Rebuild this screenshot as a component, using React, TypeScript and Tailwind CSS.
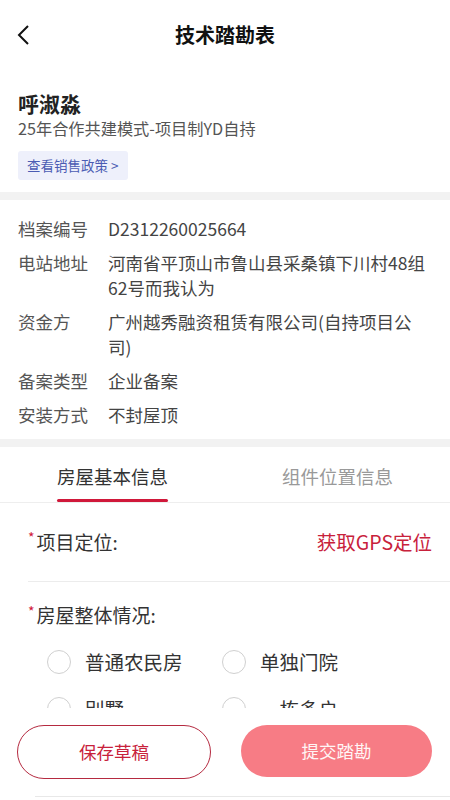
import React from "react";

const font = { fontFamily: '"Noto Sans CJK SC", "Noto Sans", sans-serif' };

function InfoRow({ label, value }: { label: string; value: string }) {
  return (
    <div className="flex text-[17.5px] leading-[25px] text-[#555]">
      <div className="w-[90px] shrink-0">{label}</div>
      <div className="flex-1 text-[#444]">{value}</div>
    </div>
  );
}

function Radio({ label }: { label: string }) {
  return (
    <div className="flex items-center h-[47px]">
      <span className="w-[24px] h-[24px] rounded-full border-[1.5px] border-[#d0d0d0] shrink-0" />
      <span className="ml-[14px] text-[19.5px] text-[#333] whitespace-nowrap">{label}</span>
    </div>
  );
}

export default function App() {
  return (
    <div className="w-[450px] h-[800px] overflow-hidden bg-white flex flex-col" style={font}>
      {/* header */}
      <div className="h-[70px] shrink-0 flex items-center relative">
        <div className="pl-[17px] w-[60px]">
          <svg width="12" height="20" viewBox="0 0 12 20" fill="none">
            <polyline points="11,1 2,10 11,19" stroke="#111" strokeWidth="2" strokeLinejoin="miter" />
          </svg>
        </div>
        <div className="flex-1 text-center text-[20px] font-bold text-[#111] pr-[60px]">技术踏勘表</div>
      </div>

      <div className="flex-1 overflow-hidden flex flex-col">
        {/* customer */}
        <div className="px-[18px] pt-[20px] pb-[12px]">
          <div className="text-[21px] leading-[26px] font-bold text-[#222]">呼淑淼</div>
          <div className="text-[16.2px] leading-[24px] text-[#555]">25年合作共建模式-项目制YD自持</div>
          <div className="mt-[11px] inline-flex items-center h-[29px] px-[9px] rounded-[3px] bg-[#eef0fb] text-[13.5px] text-[#4b5cb3]">
            查看销售政策 &gt;
          </div>
        </div>
        <div className="h-[8px] bg-[#f2f2f2] shrink-0" />

        {/* info */}
        <div className="pl-[18px] pr-[24px] pt-[16px] pb-[12px] flex flex-col gap-[9px]">
          <InfoRow label="档案编号" value="D2312260025664" />
          <InfoRow label="电站地址" value="河南省平顶山市鲁山县采桑镇下川村48组62号而我认为" />
          <InfoRow label="资金方" value="广州越秀融资租赁有限公司(自持项目公司)" />
          <InfoRow label="备案类型" value="企业备案" />
          <InfoRow label="安装方式" value="不封屋顶" />
        </div>
        <div className="h-[8px] bg-[#f2f2f2] shrink-0" />

        {/* tabs */}
        <div className="flex h-[56px] shrink-0 border-b border-[#eeeeee]">
          <div className="flex-1 flex justify-center">
            <div className="flex flex-col items-center justify-end h-full">
              <span className="text-[18.5px] text-[#333] leading-[26px]">房屋基本信息</span>
              <span className="mt-[10px] h-[3px] w-full rounded-full bg-[#d0183a]" />
            </div>
          </div>
          <div className="flex-1 flex justify-center">
            <div className="flex flex-col items-center justify-end h-full">
              <span className="text-[18.5px] text-[#999] leading-[26px]">组件位置信息</span>
              <span className="mt-[10px] h-[3px] w-full" />
            </div>
          </div>
        </div>

        {/* form */}
        <div className="pl-[28px]">
          <div className="h-[79px] flex items-center justify-between pr-[18px] border-b border-[#ececec]">
            <div className="text-[19px] text-[#333] flex items-start">
              <span className="text-[#d0183a] text-[14px] leading-[18px] mr-[2px]">*</span>
              <span>项目定位:</span>
            </div>
            <div className="text-[19.5px] text-[#c8213b]">获取GPS定位</div>
          </div>
          <div className="pt-[20px]">
            <div className="text-[19px] leading-[26px] text-[#333] flex items-start">
              <span className="text-[#d0183a] text-[14px] leading-[18px] mr-[2px]">*</span>
              <span>房屋整体情况:</span>
            </div>
            <div className="grid grid-cols-[175px_175px] pl-[19px] mt-[10px]">
              <Radio label="普通农民房" />
              <Radio label="单独门院" />
              <Radio label="别墅" />
              <Radio label="一栋多户" />
            </div>
          </div>
        </div>
      </div>

      {/* bottom bar */}
      <div className="h-[92px] shrink-0 bg-white flex flex-col">
        <div className="flex gap-[30px] pl-[17px] pr-[18px] pt-[17px]">
          <div className="w-[194px] h-[54px] rounded-full border-[1.5px] border-[#b52a40] flex items-center justify-center text-[17.5px] text-[#c8213b]">
            保存草稿
          </div>
          <div className="flex-1 h-[52px] rounded-full bg-[#f77c85] flex items-center justify-center text-[17.5px] text-[#fff5f5]">
            提交踏勘
          </div>
        </div>
        <div className="mt-auto mb-[3px] ml-[35px] h-px bg-[#e8e8e8]" />
      </div>
    </div>
  );
}
